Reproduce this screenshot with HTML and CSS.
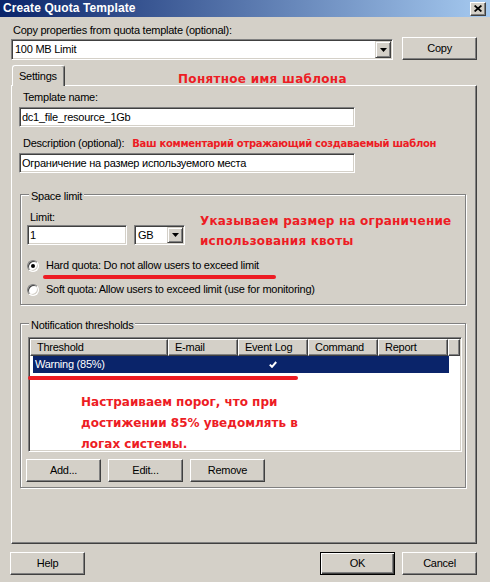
FILE: index.html
```html
<!DOCTYPE html>
<html lang="en">
<head>
  <meta charset="UTF-8" />
  <meta name="viewport" content="width=device-width, initial-scale=1.0"/>
  <title>Create Quota Template</title>
  <link rel="stylesheet" href="styles.css">
</head>
<body>
  <div class="titlebar">
    <span class="title">Create Quota Template</span>
    <button type="button" class="close-btn" aria-label="Close">
      <svg width="8" height="7" viewBox="0 0 8 7"><path d="M0.6 0.5 L7.4 6.5 M7.4 0.5 L0.6 6.5" stroke="#000" stroke-width="1.7" fill="none"/></svg>
    </button>
  </div>

  <div class="main">
    <div class="lbl copy-lbl">Copy properties from quota template (optional):</div>
    <div class="copy-row">
      <div class="combo combo-template">
        <span class="combo-text">100 MB Limit</span>
        <span class="drop-btn"><svg width="7" height="4" viewBox="0 0 7 4"><path d="M0 0 H7 L3.5 4 Z" fill="#000"/></svg></span>
      </div>
      <button type="button" class="btn">Copy</button>
    </div>

    <div class="tabs">
      <div class="tab">Settings</div>
      <span class="note note-name">Понятное имя шаблона</span>
    </div>

    <div class="panel">
      <div class="lbl field-lbl">Template name:</div>
      <div class="edit edit-wide">dc1_file_resource_1Gb</div>

      <div class="desc-row">
        <span class="lbl field-lbl">Description (optional):</span>
        <span class="note note-small">Ваш комментарий отражающий создаваемый шаблон</span>
      </div>
      <div class="edit edit-wide">Ограничение на размер используемого места</div>

      <div class="group group-space">
        <div class="group-title">Space limit</div>
        <div class="limit-row">
          <div class="limit-fields">
            <div class="lbl limit-lbl">Limit:</div>
            <div class="limit-inputs">
              <div class="edit edit-limit">1</div>
              <div class="combo combo-unit">
                <span class="combo-text">GB</span>
                <span class="drop-btn"><svg width="7" height="4" viewBox="0 0 7 4"><path d="M0 0 H7 L3.5 4 Z" fill="#000"/></svg></span>
              </div>
            </div>
          </div>
          <div class="note note-limit">Указываем размер на ограничение<br>использования квоты</div>
        </div>

        <div class="radio-row radio-hard">
          <span class="radio checked"></span>
          <span>Hard quota: Do not allow users to exceed limit</span>
          <span class="underline underline-hard"></span>
        </div>
        <div class="radio-row radio-soft">
          <span class="radio"></span>
          <span>Soft quota: Allow users to exceed limit (use for monitoring)</span>
        </div>
      </div>

      <div class="group group-notify">
        <div class="group-title">Notification thresholds</div>
        <div class="listview">
          <div class="lv-header">
            <div class="lv-col col-threshold">Threshold</div>
            <div class="lv-col">E-mail</div>
            <div class="lv-col">Event Log</div>
            <div class="lv-col">Command</div>
            <div class="lv-col">Report</div>
            <div class="lv-col col-fill"></div>
          </div>
          <div class="lv-row selected">
            <div class="lv-cell cell-threshold">Warning (85%)</div>
            <div class="lv-cell"></div>
            <div class="lv-cell cell-check">
              <svg width="8" height="7" viewBox="0 0 8 7"><path d="M0.8 3.6 L3 5.8 L7.2 1" stroke="#fff" stroke-width="2" fill="none"/></svg>
            </div>
            <div class="lv-cell"></div>
            <div class="lv-cell"></div>
          </div>
          <span class="underline underline-row"></span>
          <div class="note note-list">Настраиваем порог, что при<br>достижении 85% уведомлять в<br>логах системы.</div>
        </div>
        <div class="btn-row">
          <button type="button" class="btn">Add...</button>
          <button type="button" class="btn">Edit...</button>
          <button type="button" class="btn">Remove</button>
        </div>
      </div>
    </div>

    <div class="footer">
      <button type="button" class="btn">Help</button>
      <div class="footer-right">
        <button type="button" class="btn btn-default">OK</button>
        <button type="button" class="btn">Cancel</button>
      </div>
    </div>
  </div>
</body>
</html>
```

FILE: styles.css
```css
* {
  box-sizing: border-box;
}

body {
  margin: 0;
  width: 490px;
  height: 582px;
  overflow: hidden;
  background: #d4d0c8;
  font-family: "Liberation Sans", Arial, sans-serif;
  font-size: 11px;
  line-height: 13px;
  letter-spacing: -0.25px;
  color: #000;
}

/* title bar */
.titlebar {
  height: 17px;
  display: flex;
  align-items: center;
  justify-content: space-between;
  padding: 0 4px 0 3px;
  background: linear-gradient(to right, #0a246a, #a6caf0);
}

.title {
  color: #fff;
  font-weight: bold;
  font-size: 12px;
  letter-spacing: 0.1px;
}

.close-btn {
  width: 16px;
  height: 14px;
  padding: 0;
  display: flex;
  align-items: center;
  justify-content: center;
  background: #d4d0c8;
  border: 1px solid;
  border-color: #fff #404040 #404040 #fff;
  box-shadow: inset -1px -1px #808080;
}

/* shared controls */
.btn {
  width: 75px;
  height: 23px;
  padding: 0;
  font: inherit;
  letter-spacing: inherit;
  color: #000;
  background: #d4d0c8;
  border: 1px solid;
  border-color: #fff #404040 #404040 #fff;
  box-shadow: inset -1px -1px #808080;
}

.btn-default {
  border-color: #000;
  box-shadow: inset 1px 1px #fff, inset -1px -1px #404040, inset -2px -2px #808080;
}

.edit {
  height: 20px;
  display: flex;
  align-items: center;
  padding: 0 2px;
  background: #fff;
  border: 1px solid;
  border-color: #808080 #fff #fff #808080;
  box-shadow: inset 1px 1px #404040, inset -1px -1px #d4d0c8;
  white-space: nowrap;
}

.combo {
  display: flex;
  align-items: center;
  justify-content: space-between;
  padding: 1px;
  background: #fff;
  border: 1px solid;
  border-color: #808080 #fff #fff #808080;
  box-shadow: inset 1px 1px #404040, inset -1px -1px #d4d0c8;
}

.combo-text {
  padding-left: 2px;
}

.drop-btn {
  width: 16px;
  height: 100%;
  display: flex;
  align-items: center;
  justify-content: center;
  background: #d4d0c8;
  border: 1px solid;
  border-color: #d4d0c8 #404040 #404040 #d4d0c8;
  box-shadow: inset 1px 1px #fff, inset -1px -1px #808080;
}

.note {
  font-family: "DejaVu Sans", Verdana, sans-serif;
  font-weight: bold;
  color: #ed1c24;
  font-size: 12px;
  line-height: 14px;
  letter-spacing: 0;
  white-space: nowrap;
}

.underline {
  position: absolute;
  height: 4px;
  background: #ed1c24;
  border-radius: 2px;
}

/* top section */
.main {
  padding: 7px 13px 0 11px;
}

.copy-lbl {
  margin-left: 2px;
}

.copy-row {
  display: flex;
  align-items: flex-end;
  gap: 9px;
}

.combo-template {
  width: 383px;
  height: 21px;
}

/* tabs */
.tabs {
  display: flex;
  margin-top: 5px;
  height: 20px;
}

.tab {
  position: relative;
  z-index: 1;
  width: 53px;
  height: 21px;
  margin-left: 1px;
  padding: 4px 0 0 6px;
  background: #d4d0c8;
  border: 1px solid;
  border-bottom: none;
  border-color: #fff #404040 #fff #fff;
  border-radius: 3px 3px 0 0;
  box-shadow: inset -1px 0 #808080;
}

.note-name {
  margin: 7px 0 0 113px;
  letter-spacing: 0.3px;
}

.panel {
  height: 459px;
  padding: 5px 0 0 7px;
  border: 1px solid;
  border-color: #fff #404040 #404040 #fff;
  box-shadow: inset -1px -1px #808080;
}

.field-lbl {
  margin-left: 4px;
}

.edit-wide {
  width: 336px;
  margin-top: 3px;
}

.desc-row {
  display: flex;
  align-items: baseline;
  margin-top: 10px;
}

.note-small {
  font-size: 10px;
  line-height: 13px;
  letter-spacing: -0.3px;
  margin-left: 8px;
}

/* group boxes */
.group {
  width: 446px;
  margin-left: 1px;
  padding: 0 6px;
  border: 1px solid #808080;
  box-shadow: inset 1px 1px #fff, 1px 1px #fff;
}

.group-title {
  width: max-content;
  margin: -5px 0 0 2px;
  padding: 0 2px;
  background: #d4d0c8;
}

.group-space {
  margin-top: 21px;
  padding-bottom: 8px;
}

.limit-row {
  display: flex;
  margin-top: 8px;
}

.limit-lbl {
  margin-left: 3px;
}

.limit-inputs {
  display: flex;
  gap: 7px;
  margin-top: 1px;
}

.edit-limit {
  width: 100px;
}

.combo-unit {
  width: 51px;
  height: 20px;
}

.note-limit {
  margin-left: 15px;
  line-height: 20px;
  letter-spacing: 0.2px;
}

.radio-row {
  position: relative;
  display: flex;
  align-items: center;
  gap: 7px;
  height: 13px;
}

.radio-hard {
  margin-top: 8px;
}

.radio-soft {
  margin-top: 11px;
}

.radio {
  width: 12px;
  height: 12px;
  display: flex;
  align-items: center;
  justify-content: center;
  border-radius: 50%;
  background: #fff;
  border: 1px solid;
  border-color: #808080 #fff #fff #808080;
  box-shadow: inset 1px 1px #404040, inset -1px -1px #d4d0c8;
}

.radio.checked::after {
  content: "";
  width: 4px;
  height: 4px;
  border-radius: 50%;
  background: #000;
}

.underline-hard {
  left: 16px;
  top: 16px;
  width: 233px;
}

.group-notify {
  margin-top: 18px;
  padding-bottom: 5px;
}

/* list view */
.listview {
  position: relative;
  width: 434px;
  height: 115px;
  margin: 5px 0 0 1px;
  padding: 1px;
  background: #fff;
  border: 1px solid;
  border-color: #808080 #fff #fff #808080;
  box-shadow: inset 1px 1px #404040, inset -1px -1px #d4d0c8;
}

.lv-header {
  display: flex;
  height: 17px;
}

.lv-col {
  width: 70px;
  padding: 1px 0 0 6px;
  background: #d4d0c8;
  border: 1px solid;
  border-color: #fff #404040 #404040 #fff;
  box-shadow: inset -1px -1px #808080;
}

.col-threshold {
  width: 138px;
}

.col-fill {
  flex: 1;
}

.lv-row {
  display: flex;
  width: 416px;
  height: 17px;
  margin-left: 3px;
  line-height: 17px;
}

.lv-row.selected {
  background: #0a246a;
  color: #fff;
}

.lv-cell {
  width: 70px;
}

.cell-threshold {
  width: 135px;
  padding-left: 2px;
}

.cell-check {
  display: flex;
  align-items: center;
  justify-content: center;
}

.underline-row {
  left: -1px;
  top: 38px;
  width: 270px;
}

.note-list {
  position: absolute;
  left: 52px;
  top: 54px;
  line-height: 21px;
}

.btn-row {
  display: flex;
  gap: 7px;
  margin: 7px 0 0 -1px;
}

/* footer */
.footer {
  display: flex;
  justify-content: space-between;
  margin: 8px 0 0 -1px;
}

.footer-right {
  display: flex;
  gap: 7px;
}
```
